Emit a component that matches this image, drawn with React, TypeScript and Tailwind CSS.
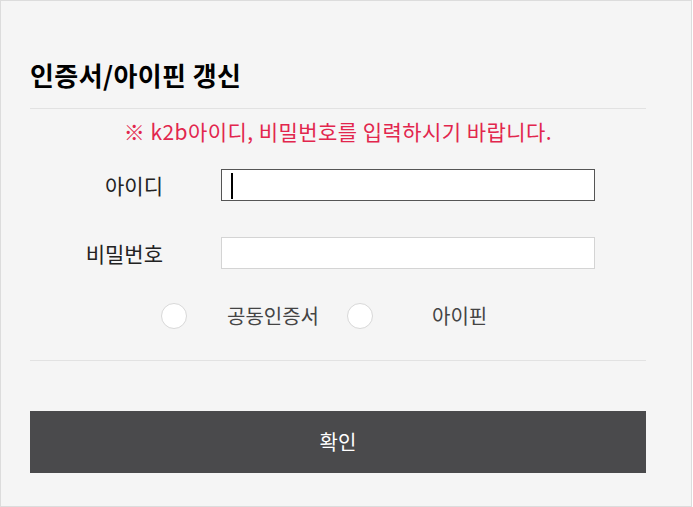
const font = { fontFamily: '"Noto Sans CJK KR", "Noto Sans", sans-serif' };

export default function App() {
  return (
    <div
      className="w-[692px] h-[507px] border border-[#dcdcdc] bg-[#f5f5f5] text-[#222]"
      style={font}
    >
      <div className="ml-[29px] w-[616px]">
        {/* Title */}
        <div className="h-[107px] flex items-end pb-[17px]">
          <h1 className="text-[26px] leading-[32px] font-bold tracking-[0.4px] text-black">
            인증서/아이핀 갱신
          </h1>
        </div>
        <div className="h-px bg-[#e2e2e2]" />

        {/* Notice */}
        <p className="mt-[8px] text-center text-[21px] leading-[28px] tracking-[0.45px] text-[#e2264d]">
          ※ k2b아이디, 비밀번호를 입력하시기 바랍니다.
        </p>

        {/* ID */}
        <div className="mt-[24px] flex items-center h-[32px]">
          <label className="w-[133px] text-right text-[21px] leading-none">아이디</label>
          <div className="relative ml-[58px] w-[374px] h-[32px] bg-white border border-[#555]">
            <span className="absolute left-[9px] top-[3px] w-[2px] h-[26px] bg-black" />
          </div>
        </div>

        {/* Password */}
        <div className="mt-[36px] flex items-center h-[32px]">
          <label className="w-[133px] text-right text-[21px] leading-none">비밀번호</label>
          <div className="ml-[58px] w-[374px] h-[32px] bg-white border border-[#d4d4d4]" />
        </div>

        {/* Radios */}
        <div className="mt-[34px] flex items-center h-[26px] text-[20px] text-[#444]">
          <span className="ml-[131px] w-[26px] h-[26px] rounded-full bg-white border border-[#d8d8d8]" />
          <span className="ml-[40px] leading-none">공동인증서</span>
          <span className="ml-[28px] w-[26px] h-[26px] rounded-full bg-white border border-[#d8d8d8]" />
          <span className="ml-[59px] leading-none">아이핀</span>
        </div>

        <div className="mt-[31px] h-px bg-[#e2e2e2]" />

        {/* Submit */}
        <button className="mt-[50px] w-[616px] h-[62px] bg-[#4a4a4c] text-white text-[20px]">
          확인
        </button>
      </div>
    </div>
  );
}
